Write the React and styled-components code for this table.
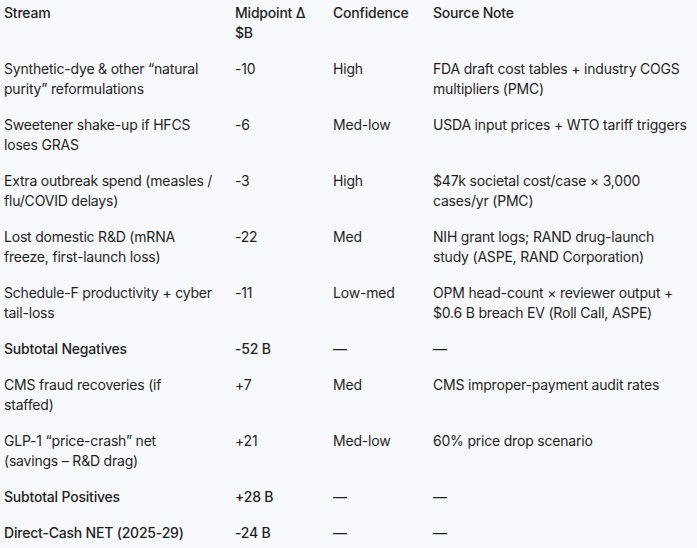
import React from "react";
import styled, { createGlobalStyle } from "styled-components";

const Global = createGlobalStyle`
  html, body {
    margin: 0;
    padding: 0;
    background: #f8f9fc;
  }
`;

// line breaks follow the reference wrapping
const rows = [
  { stream: "Synthetic-dye & other \u201cnatural\npurity\u201d reformulations", mid: "-10", conf: "High", note: "FDA draft cost tables + industry COGS\nmultipliers (PMC)" },
  { stream: "Sweetener shake-up if HFCS\nloses GRAS", mid: "-6", conf: "Med-low", note: "USDA input prices + WTO tariff triggers" },
  { stream: "Extra outbreak spend (measles /\nflu/COVID delays)", mid: "-3", conf: "High", note: "$47k societal cost/case \u00d7 3,000\ncases/yr (PMC)" },
  { stream: "Lost domestic R&D (mRNA\nfreeze, first-launch loss)", mid: "-22", conf: "Med", note: "NIH grant logs; RAND drug-launch\nstudy (ASPE, RAND Corporation)" },
  { stream: "Schedule-F productivity + cyber\ntail-loss", mid: "-11", conf: "Low-med", note: "OPM head-count \u00d7 reviewer output +\n$0.6 B breach EV (Roll Call, ASPE)" },
  { stream: "Subtotal Negatives", mid: "-52 B", conf: "\u2014", note: "\u2014", strong: true },
  { stream: "CMS fraud recoveries (if\nstaffed)", mid: "+7", conf: "Med", note: "CMS improper-payment audit rates" },
  { stream: "GLP-1 \u201cprice-crash\u201d net\n(savings \u2013 R&D drag)", mid: "+21", conf: "Med-low", note: "60% price drop scenario" },
  { stream: "Subtotal Positives", mid: "+28 B", conf: "\u2014", note: "\u2014", strong: true },
  { stream: "Direct-Cash NET (2025-29)", mid: "-24 B", conf: "\u2014", note: "\u2014", strong: true },
];

const Table = styled.div`
  display: grid;
  grid-template-columns: 231px 98px 100px 1fr;
  margin-top: -5px;
  font-family: Inter, "Noto Sans", sans-serif;
  font-size: 14px;
  line-height: 20px;
  letter-spacing: -0.2px;
  color: #1f1f1f;
`;

const Cell = styled.div`
  padding: 8px 0 8px 4px;
  white-space: pre;
  font-weight: ${({ $strong }) => ($strong ? 500 : 400)};
`;

const Head = styled(Cell)`
  font-weight: 500;
`;

export default function App() {
  return (
    <>
      <Global />
      <Table>
        <Head>Stream</Head>
        <Head>{"Midpoint Δ\n$B"}</Head>
        <Head>Confidence</Head>
        <Head>Source Note</Head>
        {rows.map((r, i) => (
          <React.Fragment key={i}>
            <Cell $strong={r.strong}>{r.stream}</Cell>
            <Cell $strong={r.strong}>{r.mid}</Cell>
            <Cell>{r.conf}</Cell>
            <Cell>{r.note}</Cell>
          </React.Fragment>
        ))}
      </Table>
    </>
  );
}
